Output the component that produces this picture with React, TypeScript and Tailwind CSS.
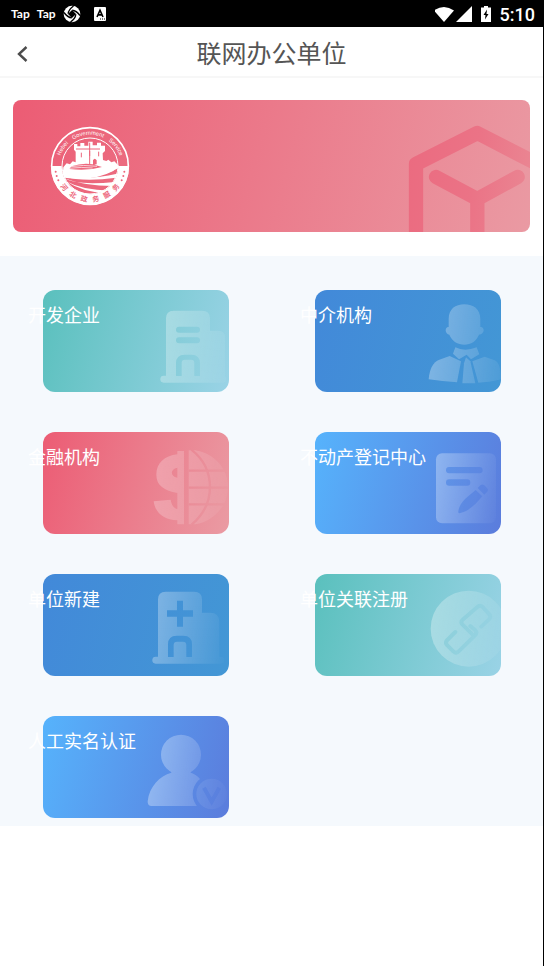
import { useId, type ReactNode } from "react";

const FONT = "font-['Roboto','Noto_Sans_CJK_SC',sans-serif]";

/* Card drawing: a white silhouette fading to the right, with parts cut out by a mask. */
function CardArt({ shape, cut, from, to, strength = 0.32 }: { shape: ReactNode; cut?: ReactNode; from: number; to: number; strength?: number }) {
  const id = useId();
  return (
    <svg viewBox="0 0 558 306" preserveAspectRatio="xMaxYMid meet" className="absolute inset-0 h-full w-full rounded-xl" aria-hidden="true">
      <defs>
        <linearGradient id={`${id}g`} gradientUnits="userSpaceOnUse" x1={from} y1="150" x2={to} y2="180">
          <stop offset="0" stopColor="#fff" stopOpacity={strength} />
          <stop offset="1" stopColor="#fff" stopOpacity="0.02" />
        </linearGradient>
        <mask id={`${id}m`} maskUnits="userSpaceOnUse" x="0" y="0" width="558" height="306">
          <g fill="#fff" stroke="none">{shape}</g>
          <g fill="#000" stroke="#000" strokeWidth="0">{cut}</g>
        </mask>
      </defs>
      <rect width="558" height="306" fill={`url(#${id}g)`} mask={`url(#${id}m)`} />
    </svg>
  );
}

const developerArt = (
  <CardArt
    from={350}
    to={580}
    shape={
      <>
        <path d="M369 258V85q0-23 23-23h86q23 0 23 23v37h25q20 0 20 20v116z" />
        <rect x="352" y="257" width="198" height="21" rx="10" />
      </>
    }
    cut={
      <>
        <rect x="399" y="110" width="72" height="18" rx="9" />
        <rect x="399" y="142" width="72" height="18" rx="9" />
        <path d="M399 258v-38q0-26 26-26h20q26 0 26 26v38h-17v-40q0-9-9-9h-20q-9 0-9 9v40z" />
      </>
    }
  />
);

const agencyArt = (
  <CardArt
    from={350}
    to={600}
    shape={
      <>
        <path d="M401 87c0-30 20-44 47-44s48 14 48 44v24c6-1 10 4 10 10s-6 13-14 13c-8 19-24 30-44 30s-37-11-45-30c-6 0-11-7-11-13s4-11 9-10z" />
        <path d="M421 172q28 14 64 0l8 21-25 15-13-14-23 14-18-17z" />
        <path d="M341 268q4-48 32-59l31-11 34 16-12 63q-45-3-85-9z" />
        <path d="M453 202l13 12 15 66h-39l5-60z" />
        <path d="M472 214l37-14 28 10q21 7 21 58-38 10-68 10z" />
      </>
    }
  />
);

const financeArt = (
  <CardArt
    from={320}
    to={580}
    strength={0.27}
    shape={
      <>
        <path
          fillRule="evenodd"
          d="M403 57h20v220h-20v-12c-41-2-67-23-71-57l51-5c3 17 10 25 20 28v-48c-39-8-63-22-63-55 0-34 24-57 63-61zm0 50c-22 5-22 25 0 30z"
        />
        <path d="M437 55h20c58 10 98 55 98 110s-40 102-98 112h-20z" />
      </>
    }
    cut={
      <g fill="none" strokeWidth="7">
        <path d="M437 116h108M437 167h118M437 217h108" />
        <path d="M445 53c36 28 56 65 56 113s-20 82-55 112" />
      </g>
    }
  />
);

const registryArt = (
  <CardArt
    from={355}
    to={560}
    shape={<rect x="363" y="64" width="180" height="210" rx="18" />}
    cut={
      <g opacity="0.85">
        <rect x="393" y="105" width="110" height="19" rx="9" />
        <rect x="393" y="142" width="73" height="19" rx="9" />
        <path d="M482 174l20 19c-18 21-37 43-68 51q-5 0-4-6c4-28 27-43 52-64z" />
        <path d="M488 168l8-8q6-5 12 0l8 8q6 6 0 12l-8 8z" />
      </g>
    }
  />
);

const newUnitArt = (
  <CardArt
    from={325}
    to={550}
    shape={
      <>
        <path d="M345 249V76q0-23 23-23h86q23 0 23 23v40h24q28 0 28 28v105z" />
        <rect x="328" y="248" width="216" height="21" rx="10" />
      </>
    }
    cut={
      <>
        <path d="M402 80h18v29h30v19h-30v30h-18v-30h-30v-19h30z" />
        <path d="M375 249v-38q0-26 26-26h20q26 0 26 26v38h-17v-36q0-10-10-10h-18q-10 0-10 10v36z" />
      </>
    }
  />
);

const linkArt = (
  <CardArt
    from={345}
    to={590}
    shape={<circle cx="461" cy="164" r="114" />}
    cut={
      <g fill="none" strokeWidth="12" strokeLinecap="round" strokeLinejoin="round" opacity="0.7">
        <path d="M421 174l-24 24q-8 8 0 16l18 18q8 8 16 0l49-48q8-8 0-16l-14-12" />
        <path d="M472 181l-30-30q-6-7 1-14l45-39q8-6 15 1l20 22q7 8-1 15l-23 22" />
      </g>
    }
  />
);

const identityArt = (
  <CardArt
    from={305}
    to={575}
    strength={0.36}
    shape={
      <>
        <circle cx="414" cy="116" r="60" />
        <path d="M385 165h58v5c25 8 45 28 61 100H326q-13 0-12-14c5-45 36-76 71-86z" />
      </>
    }
    cut={
      <>
        <circle cx="506" cy="234" r="57" />
        <circle cx="506" cy="234" r="46" fill="#999" />
        <path d="M483 215l23 42 23-42" fill="none" strokeWidth="12" />
      </>
    }
  />
);

const TEAL = "bg-[linear-gradient(105deg,#5ac0bd,#9ad3e6)]";
const BLUE = "bg-[linear-gradient(105deg,#4289d9,#4397d5)]";
const RED = "bg-[linear-gradient(105deg,#ec5c74,#ea9ba3)]";
const SKY = "bg-[linear-gradient(105deg,#56b3fc,#5b7cdc)]";

const cards = [
  { label: "开发企业", tone: TEAL, art: developerArt },
  { label: "中介机构", tone: BLUE, art: agencyArt },
  { label: "金融机构", tone: RED, art: financeArt },
  { label: "不动产登记中心", tone: SKY, art: registryArt },
  { label: "单位新建", tone: BLUE, art: newUnitArt },
  { label: "单位关联注册", tone: TEAL, art: linkArt },
  { label: "人工实名认证", tone: SKY, art: identityArt },
];

function StatusBar() {
  return (
    <div className="flex h-[27px] items-center justify-between bg-black pr-2 pl-[11px] text-white">
      <div className="flex items-center gap-[7px]">
        <span className="font-['Lato',sans-serif] text-xs leading-4 font-bold">Tap</span>
        <span className="font-['Lato',sans-serif] text-xs leading-4 font-bold">Tap</span>
        <svg viewBox="0 0 18 18" className="h-[18px] w-[18px]" aria-hidden="true">
          <circle cx="9" cy="9" r="8.3" fill="#fff" />
          <g stroke="#000" strokeWidth="1.4" fill="none">
            <path d="M5.2 8.800Q5.500 4.500 10.500 1M9.200 5.200Q13.500 5.500 17 10.500M12.800 9.200Q12.500 13.500 7.500 17M8.800 12.800Q4.500 12.500 1 7.500" />
          </g>
          <path d="M9 5L13 9 9 13 5 9z" fill="#000" />
        </svg>
        <svg viewBox="0 0 12 14" className="ml-[6px] h-3.5 w-3" aria-hidden="true">
          <rect width="12" height="14" rx="1" fill="#fff" />
          <path d="M3 10L6 3.2 9 10M4 7.9h4" stroke="#000" strokeWidth="1.6" fill="none" />
          <path d="M6 12h1M8 12h1M10 12h1" stroke="#000" strokeWidth="1" />
        </svg>
      </div>
      <div className="flex items-center">
        <svg viewBox="0 0 54 18" className="h-[18px] w-[54px]" aria-hidden="true">
          <path d="M-1 4.500Q9 -2.500 19 4.500L9 16z" fill="#fff" transform="translate(0 1)" />
          <path d="M37 1v16H21z" fill="#fff" />
        </svg>
        <svg viewBox="0 0 10 16" className="-ml-2 h-4 w-2.5" aria-hidden="true">
          <path d="M3 0h4v1.500h3V16H0V1.500h3z" fill="#fff" />
          <path d="M6 3.500L2.500 9h2L4 13.500 7.500 8h-2z" fill="#000" />
        </svg>
        <time className="ml-[9px] pt-0.5 font-['Roboto',sans-serif] text-lg leading-6 font-medium">5:10</time>
      </div>
    </div>
  );
}

function Emblem() {
  return (
    <svg viewBox="0 0 240 240" className="ml-[37px] h-20 w-20" role="img" aria-label="河北政务服务">
      <defs>
        <path id="emblem-top" d="M26 120a94 94 0 0 1 188 0" />
        <path id="emblem-bottom" d="M12 120a108 108 0 0 0 216 0" />
      </defs>
      <circle cx="120" cy="120" r="115" fill="none" stroke="#fff" strokeWidth="5" />
      <path d="M3 120h32a85 85 0 0 0 170 0h32a117 117 0 0 1-234 0z" fill="#fff" />
      <circle cx="120" cy="120" r="84" fill="none" stroke="#fff" strokeWidth="3" />
      <path d="M40 124l10-12 10 3 8-9 9 3V77l-5-6V54h10v7h9V51h12v8h12V47h13v11h13v-8h12v9h12v16l-7 7 1 20 10 3 6-4 9 8 9-3 16 16q-17 16-61 24-50 9-110 0z" fill="#fff" />
      <path d="M94 80v14M119 75v15M146 77v14M78 69h72M119 50v72" stroke="#ed667c" strokeWidth="3" />
      <path d="M129 117v-14q5-9 11 0v12zM64 121q35-12 64-6l28 8q-45 13-98 6z" fill="#ed667c" />
      <path d="M61 122q39-7 80-1M56 127q40-5 72-1" stroke="#fff" strokeWidth="2" fill="none" />
      <path d="M38 138l9-3v5h12v-4h11v5h13v-4h12v4h14v-5h14v3l14-5v4l14-6v4l14-9v4l13-9v9l13-9v12q-61 33-148 21z" fill="#fff" />
      <path d="M39 151q82 11 162-8l-3 12q-68 10-121 4-20-3-38-8z" fill="#fff" />
      <path d="M42 157q39 22 153 11l-6 12q-86 0-147-23z" fill="#fff" />
      <path d="M48 166q50 27 132 28l-12 8q-71-4-120-36z" fill="#fff" />
      <path d="M60 182q31 22 85 27-53 12-85-27z" fill="#fff" />
      <g fill="#fff" className="font-['Liberation_Sans',sans-serif] text-[17px]">
        <text textAnchor="middle">
          <textPath href="#emblem-top" startOffset="50%" xmlSpace="preserve">Hebei&#160;&#160;&#160; Government&#160;&#160;&#160; Service</textPath>
        </text>
      </g>
      <g fill="#ed667c" className="font-['Noto_Sans_CJK_SC',sans-serif] text-[21px] font-bold">
        {["河", "北", "政", "务", "服", "务"].map((char, i) => (
          <text key={i} textAnchor="middle">
            <textPath href="#emblem-bottom" startOffset={`${22 + i * 11.2}%`}>{char}</textPath>
          </text>
        ))}
      </g>
      <g fill="#ed667c">
        <circle cx="17" cy="137" r="3" />
        <circle cx="20" cy="150" r="3" />
        <circle cx="25" cy="163" r="3" />
        <circle cx="223" cy="137" r="3" />
        <circle cx="220" cy="150" r="3" />
        <circle cx="215" cy="163" r="3" />
      </g>
    </svg>
  );
}

function Banner() {
  return (
    <section className="mx-[13px] mt-[22px] flex h-[132px] items-center justify-between overflow-hidden rounded-lg bg-[linear-gradient(105deg,#ec5c74,#ea9aa3)]">
      <Emblem />
      <svg viewBox="0 0 369 396" className="h-[132px] w-[123px]" aria-hidden="true">
        <defs>
          <linearGradient id="cube" gradientUnits="userSpaceOnUse" x1="0" y1="180" x2="369" y2="230">
            <stop offset="0" stopColor="#eb6b80" />
            <stop offset="0.55" stopColor="#eb7386" />
            <stop offset="1" stopColor="#ea8592" />
          </linearGradient>
        </defs>
        <g fill="none" stroke="url(#cube)" strokeWidth="43" strokeLinejoin="round">
          <path d="M27 430V192L211 99l190 98" />
          <path d="M87 231l124 66 121-66M211 297v120" strokeLinecap="round" />
        </g>
      </svg>
    </section>
  );
}

export default function App() {
  return (
    <main className={`min-h-screen border-r border-black bg-white ${FONT}`}>
      <StatusBar />
      <header className="grid h-[51px] grid-cols-[1fr_auto_1fr] items-center border-b-2 border-[#f7f7f7]">
        <button type="button" aria-label="返回" className="ml-3 flex h-10 w-10 items-center pt-1 pl-1">
          <svg viewBox="0 0 12 18" className="h-[18px] w-3" fill="none" stroke="#4c4c4c" strokeWidth="2.400" aria-hidden="true">
            <path d="M10.500 2L3 9l7.500 7" />
          </svg>
        </button>
        <h1 className="pt-1.5 text-[25px] leading-8 text-[#555]">联网办公单位</h1>
      </header>
      <Banner />
      <nav className="mt-6 -mr-px grid grid-cols-2 gap-x-[86px] gap-y-10 border-r border-black bg-[#f5f9fd] pt-[34px] pr-[42px] pb-2 pl-[43px]">
        {cards.map(({ label, tone, art }) => (
          <button key={label} type="button" className={`relative flex h-[102px] items-start rounded-xl pt-3.5 ${tone}`}>
            {art}
            <span className="relative -ml-[15px] text-lg leading-6 whitespace-nowrap text-white">{label}</span>
          </button>
        ))}
      </nav>
    </main>
  );
}
